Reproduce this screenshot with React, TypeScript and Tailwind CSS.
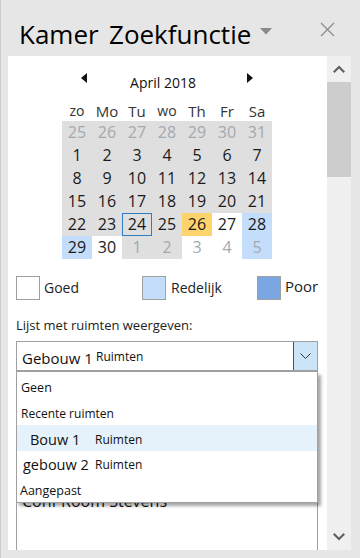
import React from "react";

type Cell = { d: number; bg: string; muted?: boolean; sel?: boolean };

const G = "bg-[#dfdfdf]";
const W = "bg-white";
const B = "bg-[#c4ddfb]";
const Y = "bg-[#fcd46b]";

const rows: Cell[][] = [
  [25, 26, 27, 28, 29, 30, 31].map((d) => ({ d, bg: G, muted: true })),
  [1, 2, 3, 4, 5, 6, 7].map((d) => ({ d, bg: G })),
  [8, 9, 10, 11, 12, 13, 14].map((d) => ({ d, bg: G })),
  [15, 16, 17, 18, 19, 20, 21].map((d) => ({ d, bg: G })),
  [
    { d: 22, bg: G },
    { d: 23, bg: G },
    { d: 24, bg: G, sel: true },
    { d: 25, bg: G },
    { d: 26, bg: Y },
    { d: 27, bg: W },
    { d: 28, bg: B },
  ],
  [
    { d: 29, bg: B },
    { d: 30, bg: W },
    { d: 1, bg: G, muted: true },
    { d: 2, bg: G, muted: true },
    { d: 3, bg: W, muted: true },
    { d: 4, bg: W, muted: true },
    { d: 5, bg: B, muted: true },
  ],
];

const days = [
  { t: "zo", s: "text-[14px]" },
  { t: "Mo", s: "text-[15px]" },
  { t: "Tu", s: "text-[15px]" },
  { t: "wo", s: "text-[14px]" },
  { t: "Th", s: "text-[15px]" },
  { t: "Fr", s: "text-[15px]" },
  { t: "Sa", s: "text-[15px]" },
];

export default function App() {
  return (
    <div className="w-[360px] h-[558px] overflow-hidden bg-[#e6e6e6] border-l border-[#cccccc] font-['Open_Sans',sans-serif] text-[#1a1a1a] flex flex-col">
      {/* Header */}
      <div className="h-[56px] flex items-start shrink-0">
        <span className="ml-[18px] mt-[18px] w-[90px] text-[26px] leading-[32px] text-black">
          Kamer
        </span>
        <span className="mt-[18px] w-[151px] text-[26px] leading-[32px] text-black whitespace-nowrap">
          Zoekfunctie
        </span>
        <svg className="mt-[28px]" width="12" height="7" viewBox="0 0 12 7">
          <path d="M0 0h12L6 6.5z" fill="#8a8a8a" />
        </svg>
        <svg
          className="ml-auto mr-[25px] mt-[22px]"
          width="15"
          height="15"
          viewBox="0 0 15 15"
        >
          <path d="M1 1L14 14M14 1L1 14" stroke="#8a8a8a" strokeWidth="1.2" />
        </svg>
      </div>

      {/* Body */}
      <div className="flex h-[494px] shrink-0">
        <div className="ml-[7px] w-[319px] bg-white relative flex flex-col overflow-hidden">
          {/* Calendar */}
          <div className="ml-[54px] w-[210px] mt-[12px]">
            <div className="h-[24px] flex items-start">
              <svg className="ml-[19px] mt-[5px]" width="6" height="10" viewBox="0 0 6 10">
                <path d="M6 0v10L0 5z" fill="#111" />
              </svg>
              <div className="flex-1 text-center pr-[8px] pt-[3px] text-[14px] leading-[24px] text-[#111]">
                April 2018
              </div>
              <svg className="mr-[19px] mt-[5px]" width="6" height="10" viewBox="0 0 6 10">
                <path d="M0 0v10L6 5z" fill="#111" />
              </svg>
            </div>
            <div className="h-[29px] grid grid-cols-7 items-end">
              {days.map((d) => (
                <div key={d.t} className={`text-center leading-[20px] text-[#333] ${d.s}`}>
                  {d.t}
                </div>
              ))}
            </div>
            {rows.map((r, i) => (
              <div key={i} className="grid grid-cols-7">
                {r.map((c, j) => (
                  <div
                    key={j}
                    className={`h-[23px] flex items-center justify-center text-[16px] leading-[23px] ${c.bg} ${
                      c.muted ? "text-[#a3a9b0]" : "text-[#1a1a1a]"
                    } ${c.sel ? "border border-[#2f7bc4]" : ""}`}
                  >
                    {c.d}
                  </div>
                ))}
              </div>
            ))}
          </div>

          {/* Legend */}
          <div className="mt-[17px] h-[24px] flex items-center">
            <div className="ml-[8px] w-[126px] flex items-center">
              <div className="w-[24px] h-[24px] border border-[#a0a0a0] bg-white" />
              <span className="ml-[4px] text-[14px] leading-[24px] text-[#222]">Goed</span>
            </div>
            <div className="w-[115px] flex items-center">
              <div className="w-[24px] h-[24px] border border-[#a0a0a0] bg-[#c4ddfb]" />
              <span className="ml-[5px] text-[14px] leading-[24px] text-[#222]">Redelijk</span>
            </div>
            <div className="flex items-start h-[24px]">
              <div className="w-[24px] h-[24px] border border-[#a0a0a0] bg-[#7aa6e1]" />
              <span className="ml-[4px] text-[15px] leading-[20px] text-[#222]">Poor</span>
            </div>
          </div>

          {/* Label */}
          <div className="ml-[8px] mt-[16px] text-[13px] leading-[18px] text-[#222]">
            Lijst met ruimten weergeven:
          </div>

          {/* Select */}
          <div className="ml-[8px] mt-[7px] w-[302px] h-[31px] border border-b-2 border-[#a0a0a0] flex shrink-0">
            <div className="flex-1 flex items-start pl-[5px]">
              <span className="w-[74px] pt-[4px] text-[15px] leading-[24px] text-[#111] whitespace-nowrap">
                Gebouw 1
              </span>
              <span className="pt-[3px] text-[12px] leading-[24px] text-[#111]">Ruimten</span>
            </div>
            <div className="w-[24px] h-[28px] bg-[#cce4f7] border-l border-[#0063c2] flex items-center justify-center">
              <svg width="11" height="6" viewBox="0 0 11 6">
                <path d="M0.5 0.5L5.5 5.5L10.5 0.5" stroke="#333" strokeWidth="1" fill="none" />
              </svg>
            </div>
          </div>

          {/* List box behind */}
          <div className="ml-[8px] w-[302px] flex-1 border-x border-[#a0a0a0] pt-[119px] pl-[5px]">
            <div className="text-[16px] leading-[20px] text-[#111] whitespace-nowrap">
              Conf Room Stevens
            </div>
          </div>

          {/* Dropdown popup */}
          <div className="absolute left-[8px] top-[316px] w-[302px] h-[131px] bg-white border-x border-b border-[#a0a0a0] shadow-[3px_3px_3px_rgba(0,0,0,0.35)] flex flex-col">
            <div className="h-[27px] pt-[4px] pl-[4px] text-[12.5px] leading-[23px] text-[#111]">
              Geen
            </div>
            <div className="h-[26px] pt-[4px] pl-[4px] text-[12px] leading-[22px] text-[#111]">
              Recente ruimten
            </div>
            <div className="h-[26px] bg-[#e5f1fb] flex items-start">
              <span className="w-[78px] pl-[13px] pt-[3px] text-[14.5px] leading-[23px] text-[#111] whitespace-nowrap">
                Bouw 1
              </span>
              <span className="pt-[3px] text-[12px] leading-[23px] text-[#111]">Ruimten</span>
            </div>
            <div className="h-[26px] flex items-start">
              <span className="w-[78px] pl-[6px] pt-[2px] text-[14.5px] leading-[24px] text-[#111] whitespace-nowrap">
                gebouw 2
              </span>
              <span className="pt-[2px] text-[12px] leading-[24px] text-[#111]">Ruimten</span>
            </div>
            <div className="h-[25px] pl-[3px] pt-[3px] text-[12.5px] leading-[22px] text-[#111]">
              Aangepast
            </div>
          </div>
        </div>

        {/* Scrollbar */}
        <div className="w-[24px] bg-[#f0f0f0] flex flex-col">
          <div className="h-[26px] flex items-center justify-center">
            <svg width="12" height="8" viewBox="0 0 12 8">
              <path d="M0 6.5L6 0.5L12 6.5L10.5 8L6 3.5L1.5 8z" fill="#606060" />
            </svg>
          </div>
          <div className="h-[95px] bg-[#cdcdcd]" />
          <div className="flex-1" />
          <div className="h-[26px] flex items-center justify-center">
            <svg width="12" height="8" viewBox="0 0 12 8">
              <path d="M0 1.5L6 7.5L12 1.5L10.5 0L6 4.5L1.5 0z" fill="#606060" />
            </svg>
          </div>
        </div>
      </div>
      <div className="flex-1" />
    </div>
  );
}
